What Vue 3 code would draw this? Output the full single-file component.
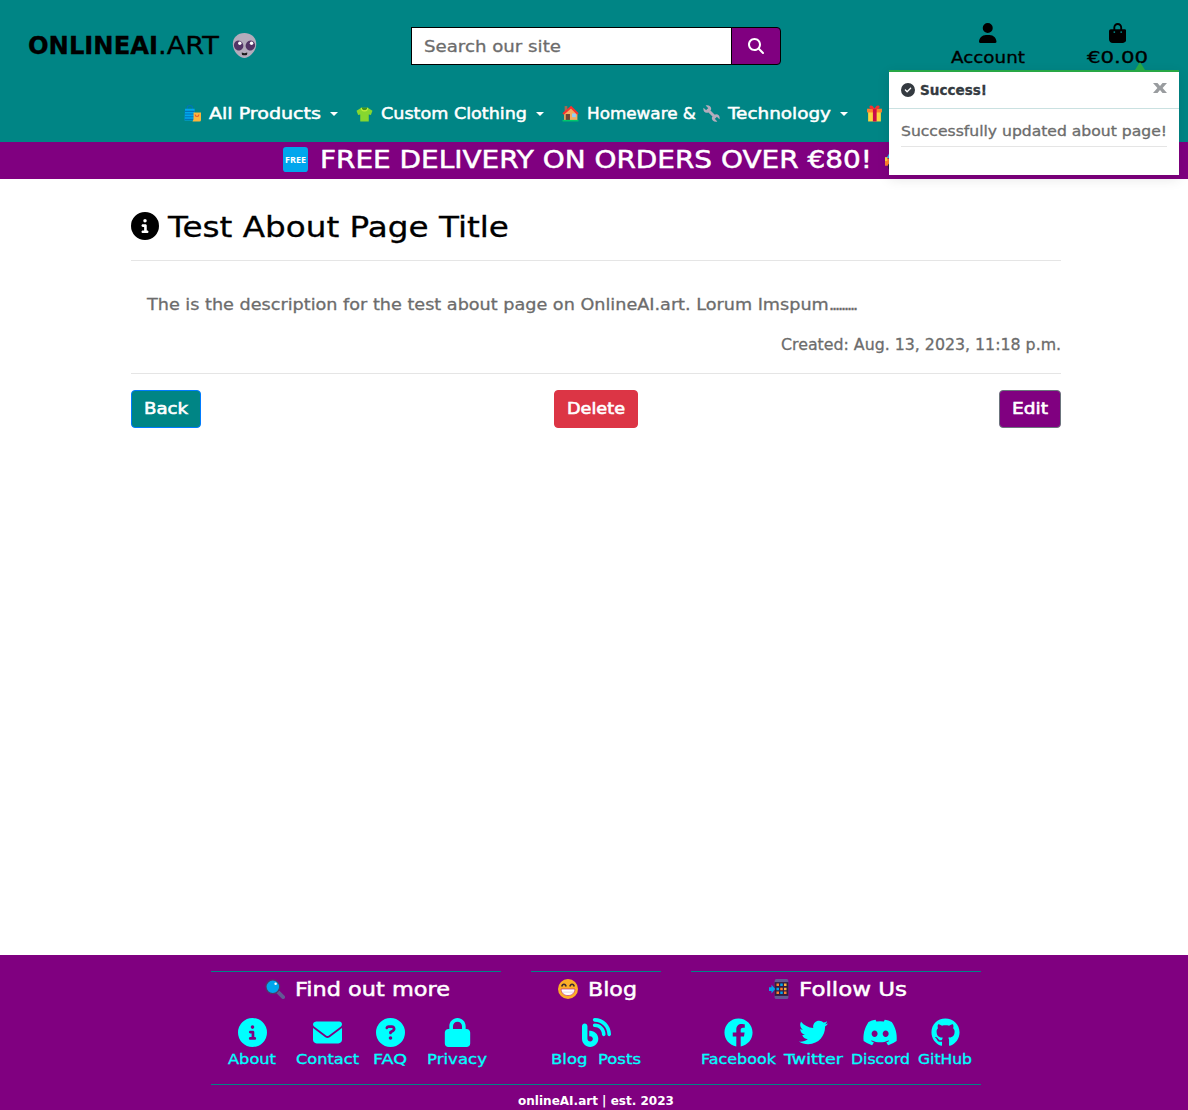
<script setup>
const solid = {
  info: 'M256 512A256 256 0 1 0 256 0a256 256 0 1 0 0 512zM216 336h24V272H216c-13.3 0-24-10.7-24-24s10.7-24 24-24h48c13.3 0 24 10.7 24 24v88h8c13.3 0 24 10.7 24 24s-10.7 24-24 24H216c-13.3 0-24-10.7-24-24s10.7-24 24-24zm40-208a32 32 0 1 1 0 64 32 32 0 1 1 0-64z',
  check: 'M256 512A256 256 0 1 0 256 0a256 256 0 1 0 0 512zM369 209L241 337c-9.4 9.4-24.6 9.4-33.9 0l-64-64c-9.4-9.4-9.4-24.6 0-33.9s24.6-9.4 33.9 0l47 47L335 175c9.4-9.4 24.6-9.4 33.9 0s9.4 24.6 0 33.9z',
  user: 'M224 256A128 128 0 1 0 224 0a128 128 0 1 0 0 256zm-45.7 48C79.8 304 0 383.8 0 482.3C0 498.7 13.3 512 29.7 512H418.3c16.4 0 29.7-13.3 29.7-29.7C448 383.8 368.2 304 269.7 304H178.3z',
  bag: 'M160 112c0-35.3 28.7-64 64-64s64 28.7 64 64v48H160V112zm-48 48H48c-26.5 0-48 21.5-48 48V416c0 53 43 96 96 96H352c53 0 96-43 96-96V208c0-26.5-21.5-48-48-48H336V112C336 50.1 285.9 0 224 0S112 50.1 112 112v48zm24 48a24 24 0 1 1 0 48 24 24 0 1 1 0-48zm152 24a24 24 0 1 1 48 0 24 24 0 1 1 -48 0z',
  search: 'M416 208c0 45.9-14.9 88.3-40 122.7L502.6 457.4c12.5 12.5 12.5 32.8 0 45.3s-32.8 12.5-45.3 0L330.7 376c-34.4 25.2-76.8 40-122.7 40C93.1 416 0 322.9 0 208S93.1 0 208 0S416 93.1 416 208zM208 352a144 144 0 1 0 0-288 144 144 0 1 0 0 288z',
}

// w: column width, gap: space before the link, s: horizontal stretch of the label
const findOut = [
  { label: 'About', w: 48, gap: 0, s: 1.159, box: '0 0 512 512', d: solid.info },
  { label: 'Contact', w: 63, gap: 20, s: 1.157, box: '0 0 512 512', d: 'M48 64C21.5 64 0 85.5 0 112c0 15.1 7.1 29.3 19.2 38.4L236.8 313.6c11.4 8.5 27 8.5 38.4 0L492.8 150.4c12.1-9.1 19.2-23.3 19.2-38.4c0-26.5-21.5-48-48-48H48zM0 176V384c0 35.3 28.7 64 64 64H448c35.3 0 64-28.7 64-64V176L294.4 339.2c-22.8 17.1-54 17.1-76.8 0L0 176z' },
  { label: 'FAQ', w: 34, gap: 14, s: 1.254, box: '0 0 512 512', d: 'M256 512A256 256 0 1 0 256 0a256 256 0 1 0 0 512zM169.8 165.3c7.9-22.3 29.1-37.3 52.8-37.3h58.3c34.9 0 63.1 28.3 63.1 63.1c0 22.6-12.1 43.5-31.7 54.8L280 264.4c-.2 13-10.9 23.6-24 23.6c-13.3 0-24-10.7-24-24V250.5c0-8.6 4.6-16.5 12.1-20.8l44.3-25.4c4.7-2.7 7.6-7.7 7.6-13.1c0-8.4-6.8-15.1-15.1-15.1H222.6c-3.4 0-6.4 2.1-7.5 5.3l-.4 1.2c-4.4 12.5-18.2 19-30.6 14.6s-19-18.2-14.6-30.6l.4-1.2zM224 352a32 32 0 1 1 64 0 32 32 0 1 1 -64 0z' },
  { label: 'Privacy', w: 60, gap: 20, s: 1.183, box: '-32 0 512 512', d: 'M144 144v48H304V144c0-44.2-35.8-80-80-80s-80 35.8-80 80zM80 192V144C80 64.5 144.5 0 224 0s144 64.5 144 144v48h16c35.3 0 64 28.7 64 64V448c0 35.3-28.7 64-64 64H64c-35.3 0-64-28.7-64-64V256c0-35.3 28.7-64 64-64H80z' },
]
const blog = [
  { label: 'Blog\u00a0 Posts', w: 90, gap: 0, s: 1.177, box: '0 0 512 512', d: 'M192 32c0 17.7 14.3 32 32 32c123.7 0 224 100.3 224 224c0 17.7 14.3 32 32 32s32-14.3 32-32C512 128.9 383.1 0 224 0c-17.7 0-32 14.3-32 32zm0 96c0 17.7 14.3 32 32 32c70.7 0 128 57.3 128 128c0 17.7 14.3 32 32 32s32-14.3 32-32c0-106-86-192-192-192c-17.7 0-32 14.3-32 32zM96 144c0-26.5-21.5-48-48-48S0 117.5 0 144V368c0 79.5 64.5 144 144 144s144-64.5 144-144s-64.5-144-144-144H128v96h16c26.5 0 48 21.5 48 48s-21.5 48-48 48s-48-21.5-48-48V144z' },
]
const social = [
  { label: 'Facebook', w: 75, gap: 0, s: 1.14, box: '0 0 512 512', d: 'M504 256C504 119 393 8 256 8S8 119 8 256c0 123.78 90.69 226.38 209.25 245V327.69h-63V256h63v-54.64c0-62.15 37-96.48 93.67-96.48 27.14 0 55.52 4.84 55.52 4.84v61h-31.28c-30.8 0-40.41 19.12-40.41 38.73V256h68.78l-11 71.69h-57.78V501C413.31 482.38 504 379.78 504 256z' },
  { label: 'Twitter', w: 59, gap: 8, s: 1.257, box: '0 0 512 512', d: 'M459.37 151.716c.325 4.548.325 9.097.325 13.645 0 138.72-105.583 298.558-298.558 298.558-59.452 0-114.68-17.219-161.137-47.106 8.447.974 16.568 1.299 25.34 1.299 49.055 0 94.213-16.568 130.274-44.832-46.132-.975-84.792-31.188-98.112-72.772 6.498.974 12.995 1.624 19.818 1.624 9.421 0 18.843-1.3 27.614-3.573-48.081-9.747-84.143-51.98-84.143-102.985v-1.299c13.969 7.797 30.214 12.67 47.431 13.319-28.264-18.843-46.781-51.005-46.781-87.391 0-19.492 5.197-37.36 14.294-52.954 51.655 63.675 129.3 105.258 216.365 109.807-1.624-7.797-2.599-15.918-2.599-24.04 0-57.828 46.782-104.934 104.934-104.934 30.213 0 57.502 12.67 76.67 33.137 23.715-4.548 46.456-13.32 66.599-25.34-7.798 24.366-24.366 44.833-46.132 57.827 21.117-2.273 41.584-8.122 60.426-16.243-14.292 20.791-32.161 39.308-52.628 54.253z' },
  { label: 'Discord', w: 59, gap: 8, s: 1.121, box: '0 0 640 512', d: 'M524.531,69.836a1.5,1.5,0,0,0-.764-.7A485.065,485.065,0,0,0,404.081,32.03a1.816,1.816,0,0,0-1.923.91,337.461,337.461,0,0,0-14.9,30.6,447.848,447.848,0,0,0-134.426,0,309.541,309.541,0,0,0-15.135-30.6,1.89,1.89,0,0,0-1.924-.91A483.689,483.689,0,0,0,116.085,69.137a1.712,1.712,0,0,0-.788.676C39.068,183.651,18.186,294.69,28.43,404.354a2.016,2.016,0,0,0,.765,1.375A487.666,487.666,0,0,0,176.02,479.918a1.9,1.9,0,0,0,2.063-.676A348.2,348.2,0,0,0,208.12,430.4a1.86,1.86,0,0,0-1.019-2.588,321.173,321.173,0,0,1-45.868-21.853,1.885,1.885,0,0,1-.185-3.126c3.082-2.309,6.166-4.711,9.109-7.137a1.819,1.819,0,0,1,1.9-.256c96.229,43.917,200.41,43.917,295.5,0a1.812,1.812,0,0,1,1.924.233c2.944,2.426,6.027,4.851,9.132,7.16a1.884,1.884,0,0,1-.162,3.126,301.407,301.407,0,0,1-45.89,21.83,1.875,1.875,0,0,0-1,2.611,391.055,391.055,0,0,0,30.014,48.815,1.864,1.864,0,0,0,2.063.7A486.048,486.048,0,0,0,610.7,405.729a1.882,1.882,0,0,0,.765-1.352C623.729,277.594,590.933,167.465,524.531,69.836ZM222.491,337.58c-28.972,0-52.844-26.587-52.844-59.239S193.056,219.1,222.491,219.1c29.665,0,53.306,26.82,52.843,59.239C275.334,310.993,251.924,337.58,222.491,337.58Zm195.38,0c-28.971,0-52.843-26.587-52.843-59.239S388.437,219.1,417.871,219.1c29.667,0,53.307,26.82,52.844,59.239C470.715,310.993,447.538,337.58,417.871,337.58Z' },
  { label: 'GitHub', w: 54, gap: 8, s: 1.113, box: '-8 0 512 512', d: 'M165.9 397.4c0 2-2.3 3.6-5.2 3.6-3.3.3-5.6-1.3-5.6-3.6 0-2 2.3-3.6 5.2-3.6 3-.3 5.6 1.3 5.6 3.6zm-31.1-4.5c-.7 2 1.3 4.3 4.3 4.9 2.6 1 5.6 0 6.2-2s-1.3-4.3-4.3-5.2c-2.6-.7-5.5.3-6.2 2.3zm44.2-1.7c-2.9.7-4.9 2.6-4.6 4.9.3 2 2.9 3.3 5.9 2.6 2.9-.7 4.9-2.6 4.6-4.6-.3-1.9-3-3.2-5.9-2.9zM244.8 8C106.1 8 0 113.3 0 252c0 110.9 69.8 205.8 169.5 239.2 12.8 2.3 17.3-5.6 17.3-12.1 0-6.2-.3-40.4-.3-61.4 0 0-70 15-84.7-29.8 0 0-11.4-29.1-27.8-36.6 0 0-22.9-15.7 1.6-15.4 0 0 24.9 2 38.6 25.8 21.9 38.6 58.6 27.5 72.9 20.9 2.3-16 8.8-27.1 16-33.7-55.9-6.2-112.3-14.3-112.3-110.5 0-27.5 7.6-41.3 23.6-58.9-2.6-6.5-11.1-33.3 2.6-67.9 20.9-6.5 69 27 69 27 20-5.6 41.5-8.5 62.8-8.5s42.8 2.9 62.8 8.5c0 0 48.1-33.6 69-27 13.7 34.7 5.2 61.4 2.6 67.9 16 17.7 25.8 31.5 25.8 58.9 0 96.5-58.9 104.2-114.8 110.5 9.2 7.9 17 22.9 17 46.4 0 33.7-.3 75.4-.3 83.6 0 6.5 4.6 14.4 17.3 12.1C428.2 457.8 496 362.9 496 252 496 113.3 383.5 8 244.8 8z' },
]
const groups = [
  { cls: 'find', title: 'Find out more', s: 1.121, links: findOut },
  { cls: 'blog', title: 'Blog', s: 1.108, links: blog },
  { cls: 'follow', title: 'Follow Us', s: 1.147, links: social },
]
</script>

<template>
  <div class="page">
    <header class="header">
      <div class="top">
        <a class="logo">
          <strong class="fit logo-bold">ONLINEAI</strong><span class="fit logo-thin">.ART</span>
          <svg class="alien" viewBox="0 0 32 32"><path d="M16 0C7 0 1 6 1 14c0 10 9 18 15 18s15-8 15-18C31 6 25 0 16 0z" fill="#b4acbc" /><ellipse cx="8.500" cy="16" rx="6" ry="6.500" transform="rotate(-20 8.5 16)" fill="#533566" /><ellipse cx="23.500" cy="16" rx="6" ry="6.500" transform="rotate(20 23.5 16)" fill="#533566" /><circle cx="10" cy="13" r="2.200" fill="#fff" /><circle cx="25" cy="13" r="2.200" fill="#fff" /><path d="M12.500 25v1.500a2 2 0 0 0 2 2h3a2 2 0 0 0 2-2V25l-3.500 1z" fill="#1c1c1c" /></svg>
        </a>
        <form class="search">
          <div class="field"><span class="fit">Search our site</span></div>
          <button type="button" class="search-btn"><svg viewBox="0 0 512 512"><path :d="solid.search" /></svg></button>
        </form>
        <a class="action account"><svg viewBox="0 0 448 512"><path :d="solid.user" /></svg><span class="fit">Account</span></a>
        <a class="action bag"><svg viewBox="0 0 448 512"><path :d="solid.bag" /></svg><span class="fit">€0.00</span></a>
      </div>
      <nav class="nav">
        <a class="n1">
          <svg class="emoji" viewBox="0 0 32 32"><path d="M6 9V6a5 5 0 0 1 10 0v3" fill="none" stroke="#0074ba" stroke-width="2" /><path d="M2 7h18v19a3 3 0 0 1-3 3H1z" fill="#00a6ed" /><path d="M1 12h19M1 17h18M1 22h18M1 27h17" stroke="#0074ba" stroke-width="2" /><path d="M18 14h14v14a3 3 0 0 1-3 3H16l2-4z" fill="#fcb43c" /><path d="M21 18c0 5 7 5 7 0" fill="none" stroke="#e8592e" stroke-width="2" /></svg>
          <span class="fit w1">All Products</span><i class="caret"></i>
        </a>
        <a class="n2">
          <svg class="emoji" viewBox="0 0 32 32"><path d="M1 11l9-6h12l9 6-3 8-4-1v13H8V18l-4 1z" fill="#86d72f" /><path d="M10 5c2 6 10 6 12 0z" fill="#44911b" /><path d="M10 5c0 8 12 8 12 0" fill="none" stroke="#c3ef3c" stroke-width="2" /></svg>
          <span class="fit w2">Custom Clothing</span><i class="caret"></i>
        </a>
        <a class="n3">
          <svg class="emoji" viewBox="0 0 32 32"><path d="M5 2h5v12H5z" fill="#a56953" /><path d="M4 14L17 4l12 11v14H4z" fill="#f3ad61" /><path d="M7 17h8v12H7z" fill="#6d4534" /><path d="M19 16h7v7h-7z" fill="#8cd0ff" /><path d="M2 17L17 4l13 13" fill="none" stroke="#f8312f" stroke-width="4" /><path d="M1 28h30v3H1z" fill="#00c86b" /></svg>
          <span class="fit w3">Homeware &amp;</span>
          <svg class="emoji wrench" viewBox="0 0 32 32"><path d="M8 8l16 16" stroke="#b4acbc" stroke-width="5.500" /><path d="M5 1l5 5-4 4-5-5c-2 8 5 12 10 8l4-4C17 4 11-1 5 1zM27 31l-5-5 4-4 5 5c2-8-5-12-10-8l-4 4c-2 5 4 10 10 8z" fill="#b4acbc" /></svg>
          <span class="fit w4">Technology</span><i class="caret"></i>
        </a>
        <a class="n4">
          <svg class="emoji" viewBox="0 0 32 32"><path d="M4 13h24v18H4z" fill="#fcd53f" /><path d="M2 7h28v7H2z" fill="#ff822d" /><path d="M13 7h7v24h-7z" fill="#ca0b4a" /><path d="M16 8C6 9 4 2 9 1c4 0 6 4 7 7 1-3 3-7 7-7 5 1 3 8-7 7z" fill="#f8312f" /></svg>
        </a>
      </nav>
    </header>

    <div class="banner">
      <svg class="free" viewBox="0 0 32 32"><rect width="32" height="32" rx="4" fill="#00a6ed" /><text x="16" y="20.300" text-anchor="middle" font-family="Open Sans, sans-serif" font-size="11.500" font-weight="700" fill="#fff">FREE</text></svg>
      <span class="fit banner-text">FREE DELIVERY ON ORDERS OVER €80!</span>
      <svg class="truck" viewBox="0 0 32 32"><path d="M2 14L7 5h20v10z" fill="#26b8f3" /><path d="M0 15h32v9H0z" fill="#ff822d" /><path d="M0 13h3v5H0z" fill="#fcd53f" /><circle cx="8" cy="25" r="4.500" fill="#321b41" /></svg>
    </div>

    <aside class="toast">
      <div class="toast-head">
        <svg viewBox="0 0 512 512"><path :d="solid.check" /></svg>
        <strong class="fit">Success!</strong>
        <svg class="close" viewBox="0 0 14 10"><path d="M0 0h4.500L7 3l2.500-3H14L9.600 5 14 10H9.500L7 7l-2.500 3H0l4.400-5z" /></svg>
      </div>
      <div class="toast-body"><p><span class="fit">Successfully updated about page!</span></p></div>
    </aside>

    <main class="main">
      <h1 class="title"><svg viewBox="0 0 512 512"><path :d="solid.info" /></svg><span class="fit">Test About Page Title</span></h1>
      <section class="content">
        <p class="desc"><span class="fit">The is the description for the test about page on OnlineAI.art. Lorum Imspum<span class="dots">.........</span></span></p>
        <p class="created"><span class="fit">Created: Aug. 13, 2023, 11:18 p.m.</span></p>
      </section>
      <div class="buttons">
        <button type="button" class="btn back"><span class="fit">Back</span></button>
        <button type="button" class="btn delete"><span class="fit">Delete</span></button>
        <button type="button" class="btn edit"><span class="fit">Edit</span></button>
      </div>
    </main>

    <footer class="footer">
      <div class="groups">
        <section v-for="g in groups" :key="g.cls" class="group" :class="g.cls">
          <h2>
            <svg v-if="g.cls === 'find'" viewBox="0 0 32 32"><path d="M21 21l8 8" stroke="#635994" stroke-width="6" stroke-linecap="round" /><circle cx="12.500" cy="12.500" r="11" fill="#00a6ed" stroke="#533566" stroke-width="2" /><circle cx="17" cy="7.500" r="2" fill="#fff" /></svg>
            <svg v-else-if="g.cls === 'blog'" viewBox="0 0 32 32"><circle cx="16" cy="16" r="16" fill="#fcaf28" /><path d="M6 12c1-5 6-5 7 0M19 12c1-5 6-5 7 0" fill="none" stroke="#402a32" stroke-width="2.500" /><path d="M5 16h22c0 14-22 14-22 0z" fill="#fff" stroke="#bb1d80" stroke-width="1" /><path d="M7 21h18" stroke="#cdc4d6" stroke-width="1" /></svg>
            <svg v-else viewBox="0 0 32 32"><rect x="9" width="22" height="32" rx="3" fill="#635994" /><path d="M9 5h22v22H9z" fill="#321b41" /><path d="M0 13h4V9l6 7-6 7v-4H0z" fill="#00a6ed" /><path d="M12 7h4v4h-4zM18 14h4v4h-4zM12 20h4v4h-4zM24 20h4v4h-4z" fill="#ff822d" /><path d="M18 7h4v4h-4zM12 14h4v4h-4zM18 20h4v4h-4z" fill="#00a6ed" /><path d="M24 7h4v4h-4zM24 14h4v4h-4z" fill="#fcb43c" /></svg>
            <span class="fit" :style="{ '--s': g.s }">{{ g.title }}</span>
          </h2>
          <div class="links">
            <a v-for="l in g.links" :key="l.label" class="link" :style="{ width: l.w + 'px', marginLeft: l.gap + 'px' }">
              <svg :viewBox="l.box"><path :d="l.d" /></svg>
              <span class="fit" :style="{ '--s': l.s }">{{ l.label }}</span>
            </a>
          </div>
        </section>
      </div>
      <p class="copy"><span class="fit">onlineAI.art | est. 2023</span></p>
    </footer>
  </div>
</template>

<style>
body { margin: 0; }
</style>

<style scoped>
* { box-sizing: border-box; }
.page { position: relative; display: flex; flex-direction: column; width: 1188px; height: 1110px; overflow: hidden; background: #fff; font: 16px/24px "DejaVu Sans", sans-serif; white-space: nowrap; }
svg { display: block; flex: none; fill: currentColor; }
p, h1, h2 { margin: 0; font-weight: 400; }
.fit { display: inline-block; flex: none; transform: scaleX(var(--s, 1)); transform-origin: 0 50%; -webkit-text-stroke: .3px currentColor; }
.header { height: 142px; background: #008585; color: #fff; }
.top { display: flex; height: 102px; padding-left: 28px; color: #000; }
.logo { display: flex; width: 383px; padding-top: 31px; font-size: 24px; line-height: 31px; }
.logo-bold { --s: 1.01; width: 130px; }
.logo-thin { --s: 1.137; width: 74px; }
.alien { width: 25px; height: 25px; margin-top: 2px; }
.search { display: flex; width: 370px; height: 38px; margin-top: 27px; }
.field { width: 321px; padding: 7px 12px 5px; border: 1px solid #000; background: #fff; color: #6c6c6c; }
.field .fit { --s: 1.136; }
.search-btn { display: flex; align-items: center; justify-content: center; width: 50px; margin-left: -1px; padding: 0; border: 1px solid #000; border-radius: 0 4px 4px 0; background: #800080; color: #fff; }
.search-btn svg { width: 16px; height: 16px; }
.action { display: flex; flex-direction: column; align-items: center; padding-top: 23px; }
.action svg { width: 17.500px; height: 20px; margin-bottom: 3px; }
.account { width: 74px; margin-left: 170px; }
.bag { width: 61px; margin-left: 62px; }
.account .fit { --s: 1.145; width: 74px; }
.bag .fit { --s: 1.332; width: 61px; }
.nav { display: flex; padding-left: 184px; }
.nav a { display: flex; }
.emoji { width: 17px; height: 17px; margin: 3px 8px 0 0; }
.caret { width: 0; height: 0; margin: 10px 0 0 9px; border: 4.500px solid transparent; border-top-color: #fff; border-bottom: 0; }
.w1 { --s: 1.191; width: 112px; }
.w2 { --s: 1.098; width: 146px; }
.w3 { --s: 1.05; width: 109px; }
.w4 { --s: 1.149; width: 103px; }
.wrench { margin-left: 7px; }
.n2, .n3, .n4 { margin-left: 18px; }
.banner { display: flex; height: 37px; padding-left: 283px; background: #800080; color: #fff; font-size: 24px; line-height: 36px; }
.free { width: 25px; height: 25px; margin: 5px 12px 0 0; }
.banner-text { --s: 1.163; width: 565px; }
.truck { width: 25px; height: 25px; margin-top: 5px; }
.toast { position: absolute; top: 70px; left: 889px; width: 290px; height: 105px; border-top: 2px solid #28a745; background: #fff; box-shadow: 0 4px 12px rgba(0, 0, 0, .1); font-size: 14px; }
.toast::before { content: ""; position: absolute; top: -10px; left: 246px; border: 5px solid transparent; border-top: 0; border-bottom: 8px solid #28a745; }
.toast-head { display: flex; height: 37px; padding: 6px 12px; border-bottom: 1px solid #cae1e1; color: #343a40; }
.toast-head svg { width: 14px; height: 14px; margin: 5px 5px 0 0; }
.toast-head .close { width: 14px; height: 10px; margin: 5px 0 0 auto; fill: #999c9f; }
.toast-head .fit { --s: .968; }
.toast-body { padding: 10px 12px; color: #6c6c6c; }
.toast-body p { height: 28px; border-bottom: 1px solid #e5e5e5; }
.toast-body .fit { --s: 1.114; }
.main { width: 930px; height: 776px; margin-left: 131px; }
.title { display: flex; height: 82px; padding-top: 33px; border-bottom: 1px solid #e5e5e5; font-size: 28px; line-height: 31px; }
.title svg { width: 28px; height: 28px; margin-right: 9px; }
.title .fit { --s: 1.166; }
.content { height: 113px; padding-top: 32px; border-bottom: 1px solid #e5e5e5; color: #6c6c6c; }
.desc { padding-left: 16px; }
.desc .fit { --s: 1.101; }
.dots { letter-spacing: -2.36px; }
.created { display: flex; justify-content: flex-end; margin-top: 16px; }
.created .fit { --s: .987; width: 280px; }
.buttons { display: flex; justify-content: space-between; margin-top: 16px; }
.btn { height: 38px; padding: 0 12px; border: 1px solid; border-radius: 4px; color: #fff; font: 16px/24px "DejaVu Sans", sans-serif; text-align: left; }
.btn .fit { -webkit-text-stroke-width: .6px; }
.back { width: 70px; border-color: #007bff; background: #008585; }
.delete { width: 84px; margin-left: -8px; border-color: #dc3545; background: #dc3545; }
.edit { width: 62px; border-color: #6c757d; background: #800080; }
.back .fit { --s: 1.133; }
.delete .fit { --s: 1.103; }
.edit .fit { --s: 1.162; }
.footer { height: 155px; padding: 16px 207px 0 211px; background: #800080; color: #fff; }
.groups { display: flex; gap: 30px; height: 114px; width: 770px; border-bottom: 1px solid #008585; }
.group { height: 100px; border-top: 1px solid #008585; }
.find, .follow { width: 290px; }
.blog { width: 130px; }
h2 { display: flex; height: 44px; padding-top: 5px; font-size: 20px; }
h2 svg { width: 20px; height: 20px; margin: 2px 10px 0 0; }
h2 .fit, .banner-text, .nav .fit { -webkit-text-stroke-width: .5px; }
.find h2 { padding-left: 54px; }
.blog h2 { padding-left: 27px; }
.follow h2 { padding-left: 78px; }
.links { display: flex; padding: 2px 0 0 17px; color: #0ff; }
.blog .links { padding-left: 20px; }
.follow .links { padding-left: 10px; }
.link { display: flex; flex-direction: column; align-items: center; font-size: 14px; line-height: 24px; }
.link svg { height: 29px; }
.link .fit { width: 100%; }
.copy { display: flex; padding-left: 307px; font-size: 12.500px; line-height: 31px; font-weight: 700; }
.copy .fit { --s: .962; -webkit-text-stroke-width: 0; }
</style>
